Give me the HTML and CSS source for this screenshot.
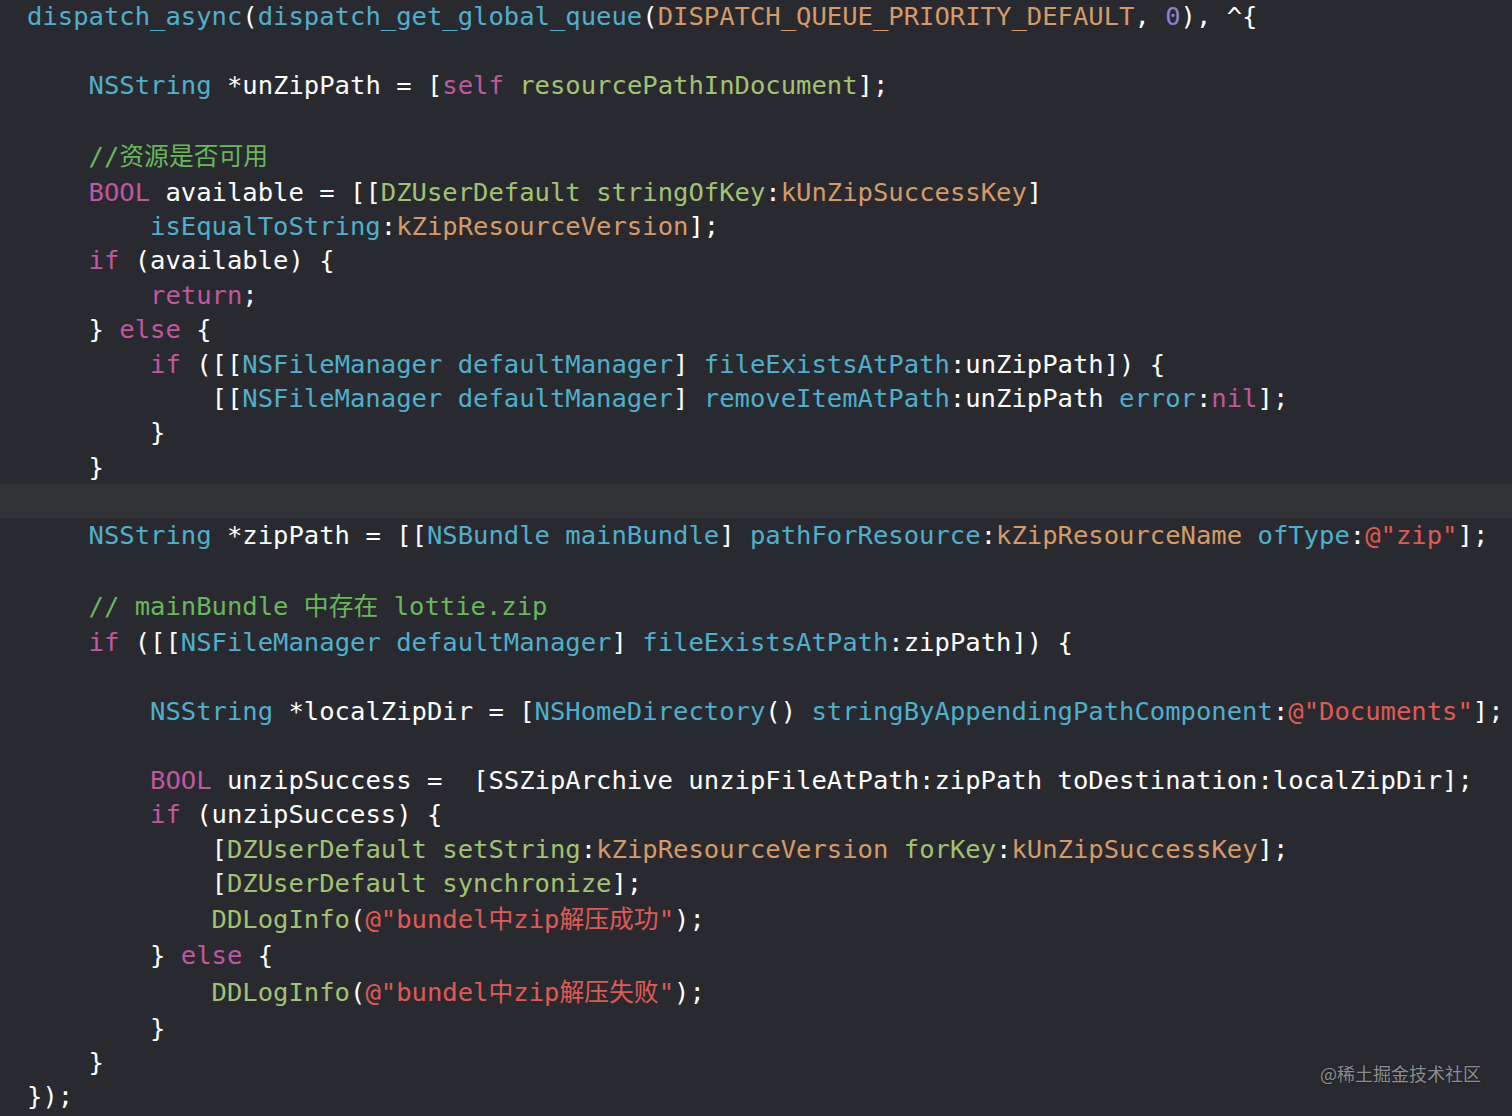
FILE: index.html
```html
<!DOCTYPE html>
<html>
<head>
	<meta charset="utf-8">
	<meta name="viewport" content="width=device-width, initial-scale=1">
	<title>GCD unzip snippet</title>
	<link rel="stylesheet" href="styles.css">
</head>
<body>
  <div class="editor">
    <div class="code">
      <div class="line"><span class="t">dispatch_async</span>(<span class="t">dispatch_get_global_queue</span>(<span class="c">DISPATCH_QUEUE_PRIORITY_DEFAULT</span>, <span class="n">0</span>), ^{</div>
      <div class="line"> </div>
      <div class="line">    <span class="t">NSString</span> *unZipPath = [<span class="k">self</span> <span class="p">resourcePathInDocument</span>];</div>
      <div class="line"> </div>
      <div class="line tall">    <span class="cm">//<span class="cjk">资源是否可用</span></span></div>
      <div class="line">    <span class="k">BOOL</span> available = [[<span class="p">DZUserDefault</span> <span class="p">stringOfKey</span>:<span class="c">kUnZipSuccessKey</span>]</div>
      <div class="line">        <span class="t">isEqualToString</span>:<span class="c">kZipResourceVersion</span>];</div>
      <div class="line">    <span class="k">if</span> (available) {</div>
      <div class="line">        <span class="k">return</span>;</div>
      <div class="line">    } <span class="k">else</span> {</div>
      <div class="line">        <span class="k">if</span> ([[<span class="t">NSFileManager</span> <span class="t">defaultManager</span>] <span class="t">fileExistsAtPath</span>:unZipPath]) {</div>
      <div class="line">            [[<span class="t">NSFileManager</span> <span class="t">defaultManager</span>] <span class="t">removeItemAtPath</span>:unZipPath <span class="t">error</span>:<span class="k">nil</span>];</div>
      <div class="line">        }</div>
      <div class="line">    }</div>
      <div class="line current"> </div>
      <div class="line">    <span class="t">NSString</span> *zipPath = [[<span class="t">NSBundle</span> <span class="t">mainBundle</span>] <span class="t">pathForResource</span>:<span class="c">kZipResourceName</span> <span class="t">ofType</span>:<span class="s">@"zip"</span>];</div>
      <div class="line"> </div>
      <div class="line tall">    <span class="cm">// mainBundle <span class="cjk">中存在</span> lottie.zip</span></div>
      <div class="line">    <span class="k">if</span> ([[<span class="t">NSFileManager</span> <span class="t">defaultManager</span>] <span class="t">fileExistsAtPath</span>:zipPath]) {</div>
      <div class="line"> </div>
      <div class="line">        <span class="t">NSString</span> *localZipDir = [<span class="t">NSHomeDirectory</span>() <span class="t">stringByAppendingPathComponent</span>:<span class="s">@"Documents"</span>];</div>
      <div class="line"> </div>
      <div class="line">        <span class="k">BOOL</span> unzipSuccess =  [SSZipArchive unzipFileAtPath:zipPath toDestination:localZipDir];</div>
      <div class="line">        <span class="k">if</span> (unzipSuccess) {</div>
      <div class="line">            [<span class="p">DZUserDefault</span> <span class="p">setString</span>:<span class="c">kZipResourceVersion</span> <span class="p">forKey</span>:<span class="c">kUnZipSuccessKey</span>];</div>
      <div class="line">            [<span class="p">DZUserDefault</span> <span class="p">synchronize</span>];</div>
      <div class="line tall">            <span class="p">DDLogInfo</span>(<span class="s">@"bundel<span class="cjk">中</span>zip<span class="cjk">解压成功</span>"</span>);</div>
      <div class="line">        } <span class="k">else</span> {</div>
      <div class="line tall">            <span class="p">DDLogInfo</span>(<span class="s">@"bundel<span class="cjk">中</span>zip<span class="cjk">解压失败</span>"</span>);</div>
      <div class="line">        }</div>
      <div class="line">    }</div>
      <div class="line">});</div>
    </div>
    <div class="watermark">@稀土掘金技术社区</div>
  </div>
</body>
</html>
```

FILE: styles.css
```css
 body{
    margin: 0;
    padding: 0;
    background-color: #292a30;
 }

 .editor{
   position: relative;
   width: 100vw;
   height: 100vh;
   overflow: hidden;
   background-color: #292a30;
 }

 .code{
   margin: -1px 0 0 0;
   padding: 0;
   font-family: "DejaVu Sans Mono", "Noto Sans CJK SC", monospace;
   font-size: 25.55px;
   color: #ffffff;
 }

 .line{
   height: 34.4px;
   line-height: 34.4px;
   padding-left: 27px;
   white-space: pre;
 }

 .line.tall{
   height: 34.4px;
   padding-bottom: 3.6px;
 }

 .line.current{
   background-color: #323337;
 }

 .cjk{
   font-family: "Noto Sans CJK SC", sans-serif;
   font-size: 24.8px;
 }

 /* syntax colours */
 .k{ color: #c2579e; }
 .t{ color: #4eb0cc; }
 .p{ color: #a2c36f; }
 .c{ color: #d69b65; }
 .n{ color: #8a83cd; }
 .s{ color: #e05a53; }
 .cm{ color: #68b85a; }

 .watermark{
   position: absolute;
   right: 31px;
   bottom: 30px;
   font-family: "Noto Sans CJK SC", "Noto Sans", sans-serif;
   font-size: 18px;
   color: #8c8d91;
   text-shadow: 0 0 2px rgba(0, 0, 0, 0.5);
 }
```
